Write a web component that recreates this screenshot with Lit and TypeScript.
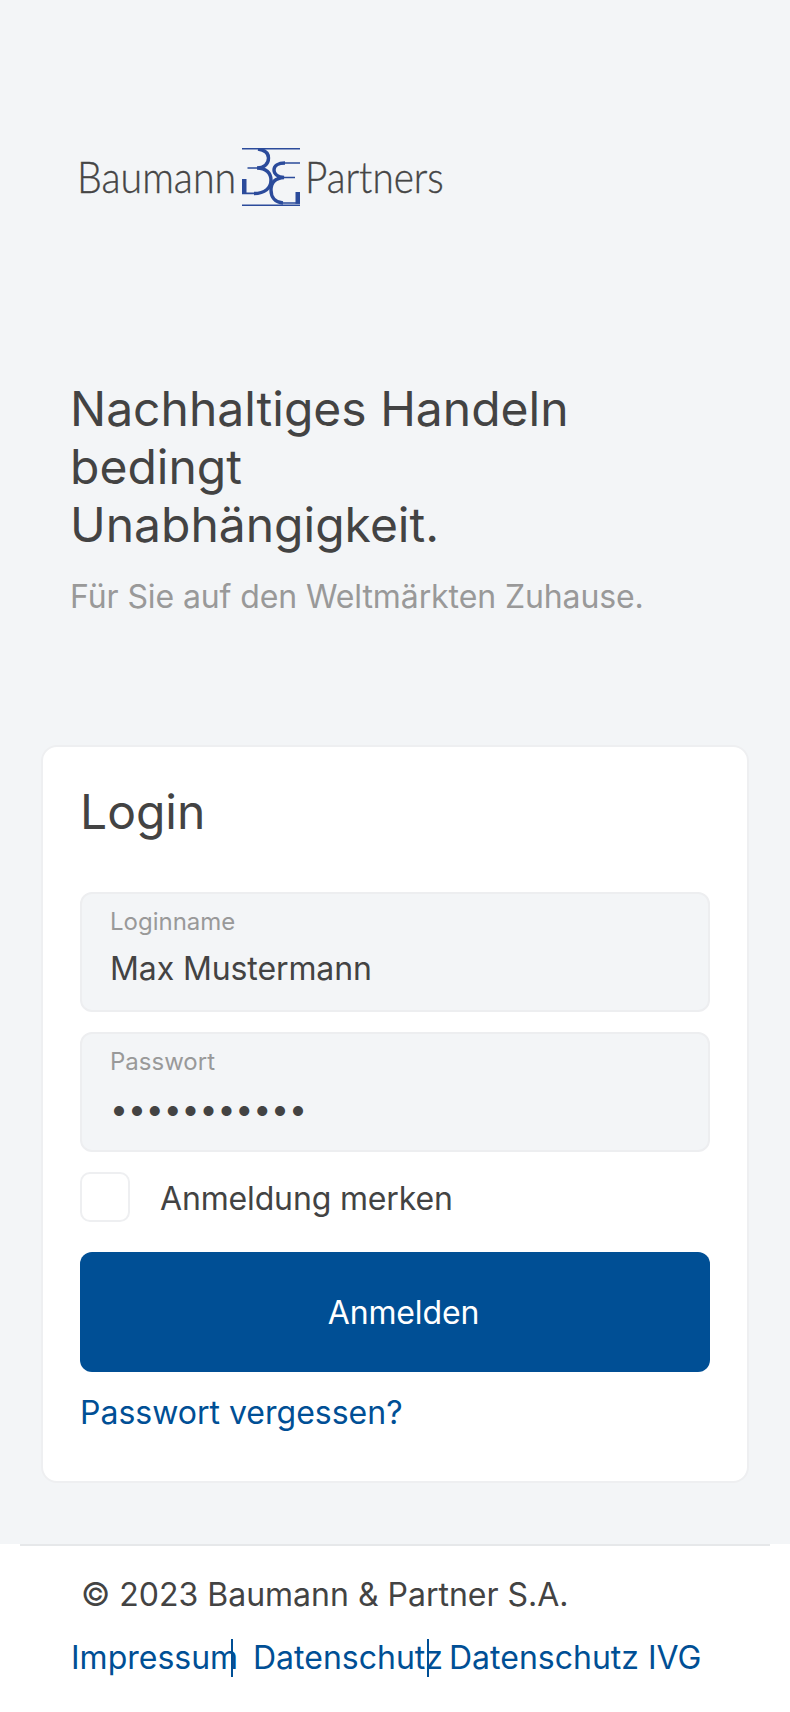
import { LitElement, html, css } from "lit";
import { customElement } from "lit/decorators.js";

@customElement("app-root")
export class AppRoot extends LitElement {
  static styles = css`
    :host { display: block; width: 790px; height: 1712px; background: #f3f5f7; font-family: Inter, "Liberation Sans", sans-serif; color: #434343; overflow: hidden; }
    * { box-sizing: border-box; }
    .page { display: flex; flex-direction: column; height: 1712px; }
    .logo { display: flex; align-items: flex-start; height: 58px; margin: 148px 0 0 77px; gap: 7px; }
    .word { font-family: Lato, sans-serif; font-weight: 300; font-size: 43px; line-height: 58px; color: #454545; display: block; height: 58px; white-space: nowrap; transform: scaleX(0.915); transform-origin: left top; -webkit-text-stroke: 0.35px #454545; }
    .word.first { width: 158px; }
    .word.after { margin-left: -2px; width: 140px; transform: scaleX(0.9); }
    .mark { width: 58px; height: 58px; display: block; flex: none; }
    .hero { margin: 174px 0 0 70px; }
    h1 { margin: 0; width: 560px; font-size: 48px; line-height: 58px; font-weight: 400; }
    .sub { margin: 23px 0 0; font-size: 32px; line-height: 40px; color: #999; white-space: nowrap; letter-spacing: -0.1px; }
    .card { margin: 128px 41px 0; height: 738px; background: #fff; border: 2px solid #eeeff1; border-radius: 16px; padding: 36px 37px 0; }
    h2 { margin: 0 0 51px; font-size: 48px; line-height: 58px; font-weight: 400; }
    .field { display: flex; flex-direction: column; height: 120px; background: #f3f5f7; border: 2px solid #edeef0; border-radius: 12px; padding: 13px 28px 0; margin-bottom: 20px; }
    .field label { font-size: 24px; line-height: 30px; color: #999; }
    .field .val { font-size: 32px; line-height: 40px; margin-top: 12px; letter-spacing: -0.1px; }
    .check { display: flex; align-items: center; gap: 30px; height: 50px; font-size: 32px; letter-spacing: -0.15px; }
    .check span:last-child { padding-top: 2px; }
    .box { width: 50px; height: 50px; border: 2px solid #eeeff1; border-radius: 10px; background: #fff; }
    .btn { display: flex; align-items: center; justify-content: center; width: 100%; height: 120px; margin-top: 30px; background: #004f95; color: #fff; border: 0; border-radius: 12px; font: inherit; font-size: 32px; padding-left: 23px; letter-spacing: -0.15px; }
    a { color: #004f95; text-decoration: none; font-size: 32px; line-height: 40px; white-space: nowrap; }
    .forgot { display: block; margin-top: 21px; }
    .footer { flex: 1; margin-top: 61px; background: #fff; }
    .rule { height: 2px; margin: 0 20px; background: #e6e8ea; }
    .copy { margin: 29px 0 0 81px; font-size: 32px; line-height: 40px; }
    .links { display: flex; gap: 20px; margin: 24px 0 0 71px; align-items: center; }
    .links a { display: block; line-height: 38px; height: 38px; }
    .links a:nth-child(1) { width: 162px; border-right: 2px solid #004f95; }
    .links a:nth-child(2) { width: 176px; border-right: 2px solid #004f95; }
  `;
  render() {
    return html`<div class="page">
      <div class="logo">
        <span class="word first">Baumann</span>
        <svg class="mark" viewBox="4 4 58 58" aria-hidden="true">
          <g fill="none" stroke="#2b4b9b">
            <path d="M4 4.7H62M4 61.3H62" stroke-width="1.7"/>
            <path d="M9.5 24H20M4 49.4H16M62 19H47M46 33.5H57M45 59H62" stroke-width="1.6"/>
            <path d="M20 5C27 6 30.5 9 30.5 14C30.5 20 26 24 19 24C28 24 33 29 33 36C33 44 27 49.5 16 49.5" stroke-width="3.4"/>
            <path d="M47 19C40 19 36 22 36 26C36 30 40 33 46 33.5C37 34 33 39 33 46C33 53 37 58.5 45 59" stroke-width="3.4"/>
          </g>
          <path d="M4 35h4.5v15H4zM57.5 48H62v11.8h-4.5z" fill="#2b4b9b"/>
        </svg>
        <span class="word after">Partners</span>
      </div>
      <div class="hero">
        <h1>Nachhaltiges Handeln bedingt<br />Unabhängigkeit.</h1>
        <p class="sub">Für Sie auf den Weltmärkten Zuhause.</p>
      </div>
      <div class="card">
        <h2>Login</h2>
        <div class="field"><label>Loginname</label><div class="val">Max Mustermann</div></div>
        <div class="field"><label>Passwort</label><div class="val">•••••••••••</div></div>
        <div class="check"><span class="box"></span><span>Anmeldung merken</span></div>
        <button class="btn">Anmelden</button>
        <a class="forgot" href="#">Passwort vergessen?</a>
      </div>
      <div class="footer">
        <div class="rule"></div>
        <p class="copy">© 2023 Baumann &amp; Partner S.A.</p>
        <div class="links">
          <a href="#">Impressum</a>
          <a href="#">Datenschutz</a>
          <a href="#">Datenschutz IVG</a>
        </div>
      </div>
    </div>`;
  }
}
